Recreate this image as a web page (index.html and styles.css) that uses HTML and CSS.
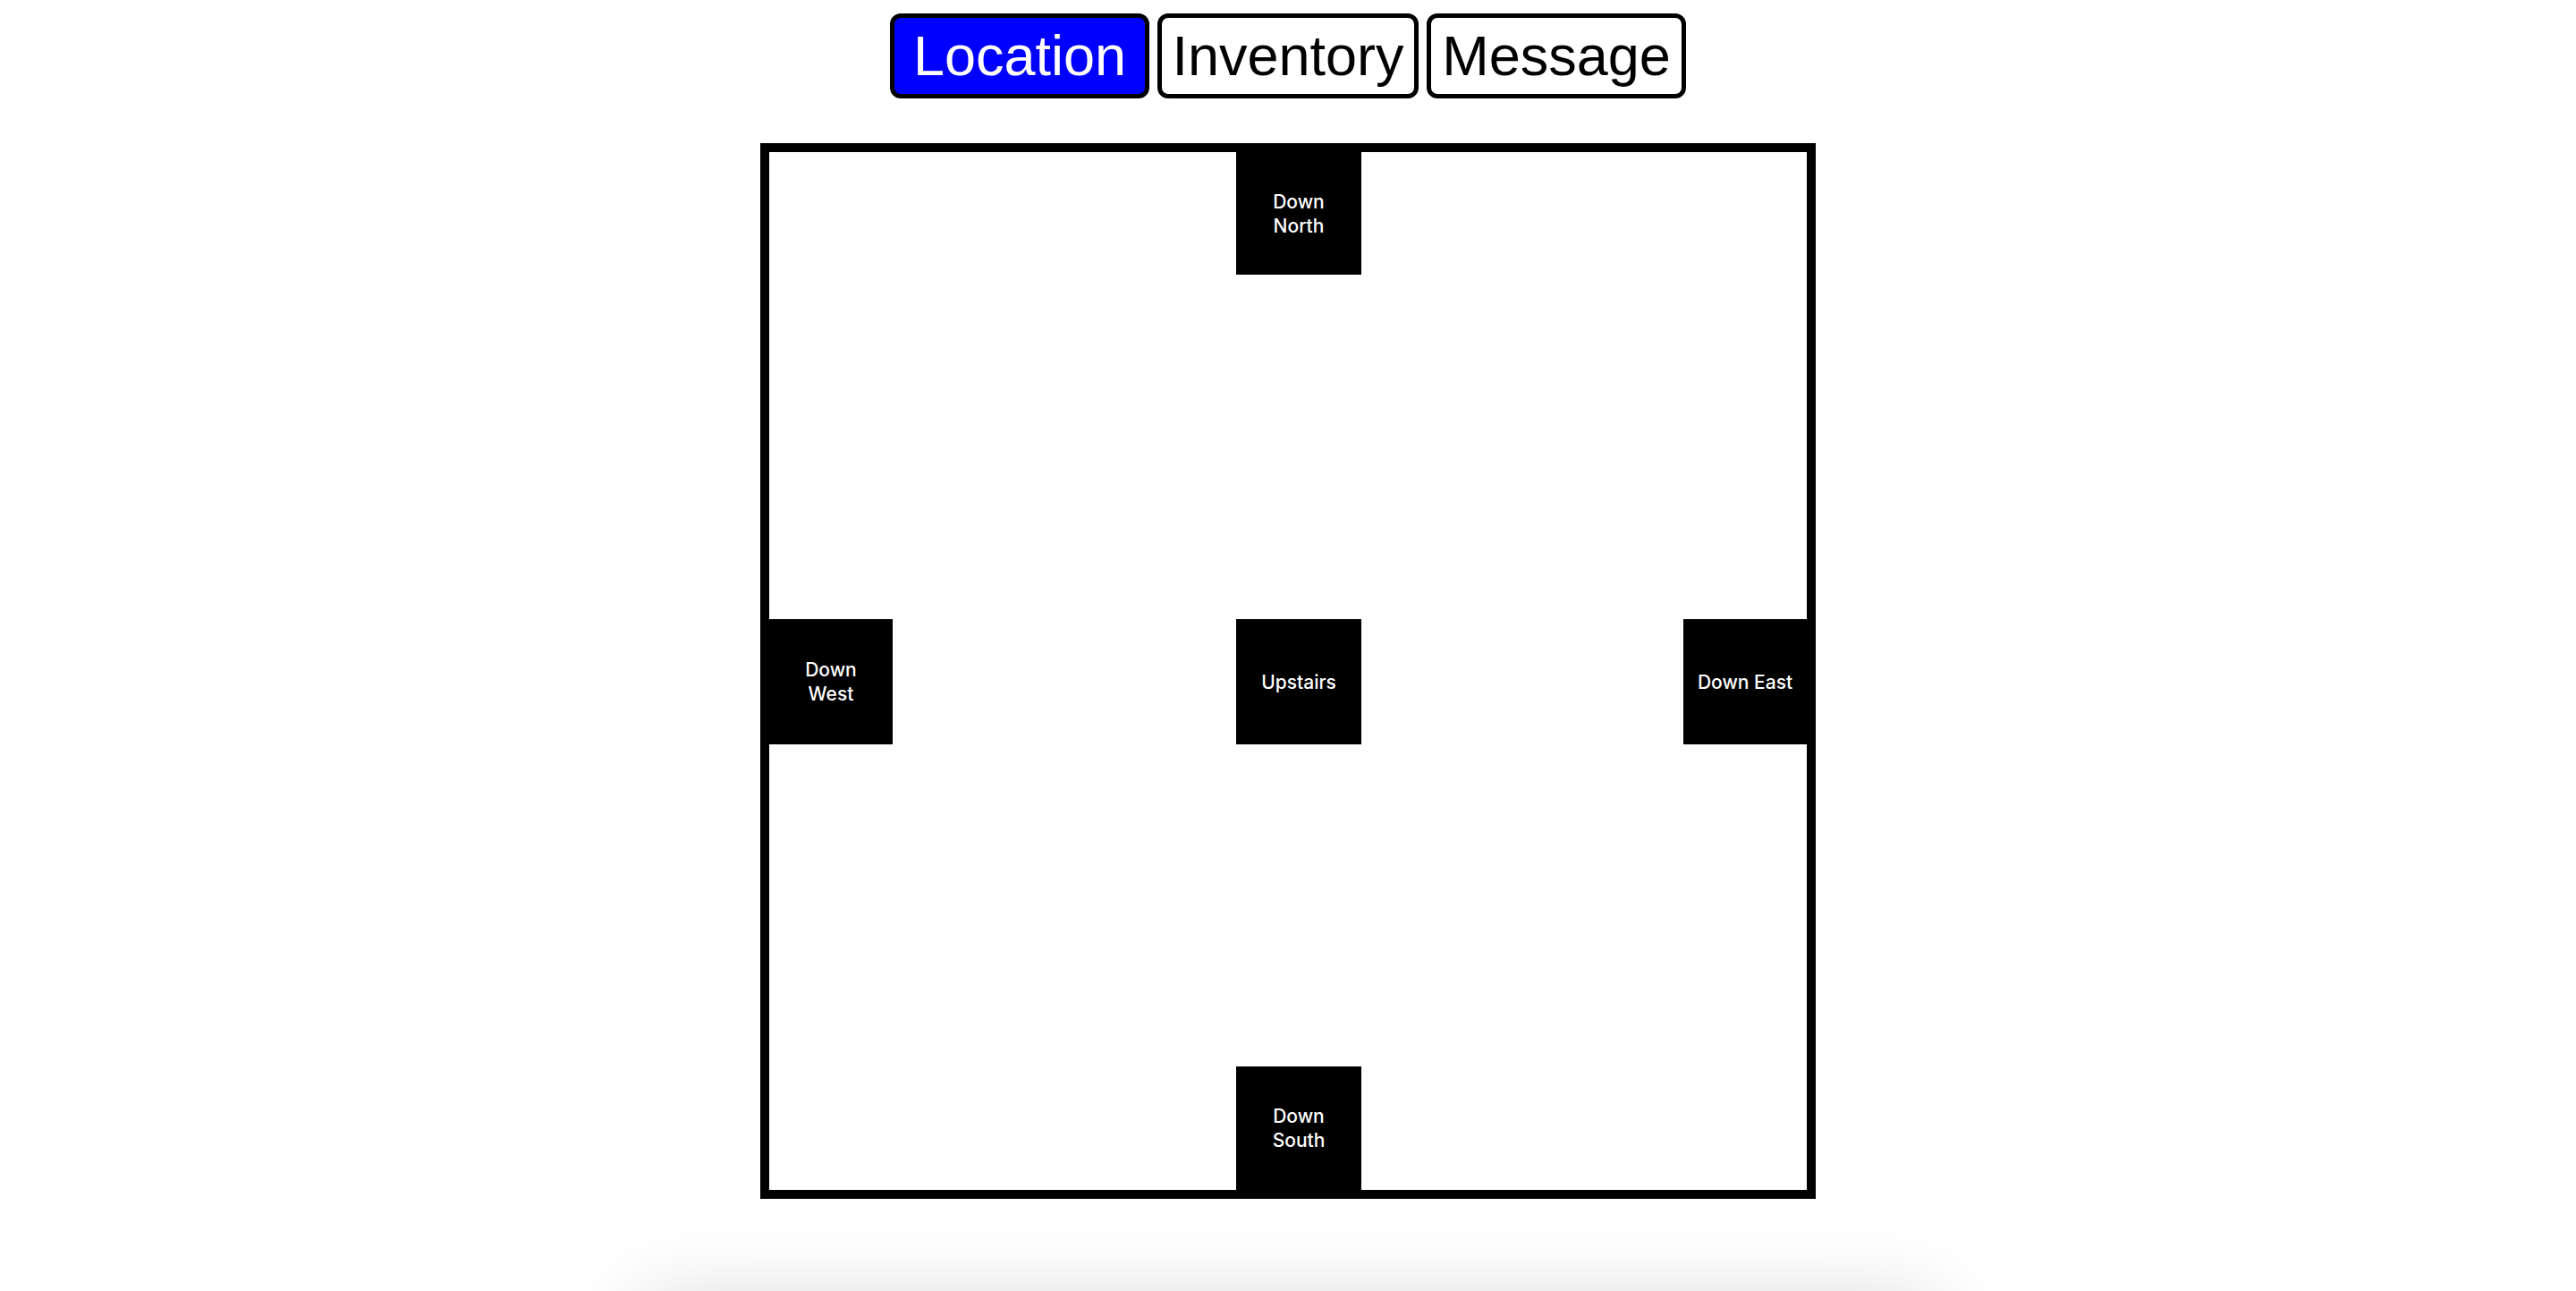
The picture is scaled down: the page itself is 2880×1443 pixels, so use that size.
FILE: index.html
```html
<!DOCTYPE html>
<html lang="en">
<head>
    <meta charset="UTF-8">
    <meta name="viewport" content="width=device-width, initial-scale=1.0">
    <title>Location</title>
    <link rel="stylesheet" href="styles.css">
</head>
<body>
    <!-- Tabs -->
    <div class="tabs">
        <button class="tab active">Location</button>
        <button class="tab tab-wide">Inventory</button>
        <button class="tab">Message</button>
    </div>

    <!-- Room map -->
    <div class="room">
        <div class="exit exit-north">Down North</div>
        <div class="exit exit-west">Down West</div>
        <div class="exit exit-center">Upstairs</div>
        <div class="exit exit-east">Down East</div>
        <div class="exit exit-south">Down South</div>
    </div>

    <!-- Panel below the fold -->
    <div class="panel"></div>
</body>
</html>
```

FILE: styles.css
```css
body {
    margin: 0;
    background-color: #fff;
    font-family: "Liberation Sans", Arial, sans-serif;
}
.tabs {
    display: flex;
    justify-content: center;
    gap: 9px;
    padding-top: 15px;
}
.tab {
    width: 290px;
    height: 95px;
    padding: 0;
    border: 5px solid #000;
    border-radius: 12px;
    background-color: #fff;
    color: #000;
    font-family: "Liberation Sans", Arial, sans-serif;
    font-size: 63px;
    line-height: 1;
    cursor: pointer;
}
.tab-wide {
    width: 292px;
}
.tab.active {
    background-color: #0000ff;
    color: #fff;
}
.room {
    position: relative;
    width: 1160px;
    height: 1160px;
    margin: 50px auto 0;
    border: 10px solid #000;
    overflow: hidden;
}
.exit {
    position: absolute;
    width: 140px;
    height: 140px;
    box-sizing: border-box;
    padding: 0 14px;
    display: flex;
    align-items: center;
    justify-content: center;
    text-align: center;
    background-color: #000;
    color: #fff;
    font-family: Inter, "Noto Sans", sans-serif;
    font-size: 21px;
    font-weight: 500;
    line-height: 27px;
}
.exit-north {
    left: 522px;
    top: 0;
    height: 137px;
}
.exit-west {
    left: 0;
    top: 522px;
    width: 138px;
}
.exit-center {
    left: 522px;
    top: 522px;
}
.exit-east {
    left: 1022px;
    top: 522px;
    width: 138px;
}
.exit-south {
    left: 522px;
    top: 1022px;
    height: 138px;
}
.panel {
    width: 1440px;
    height: 300px;
    margin: 125px auto 0;
    background-color: #fff;
    box-shadow: 0 0 100px rgba(0, 0, 0, 0.2);
}
```
